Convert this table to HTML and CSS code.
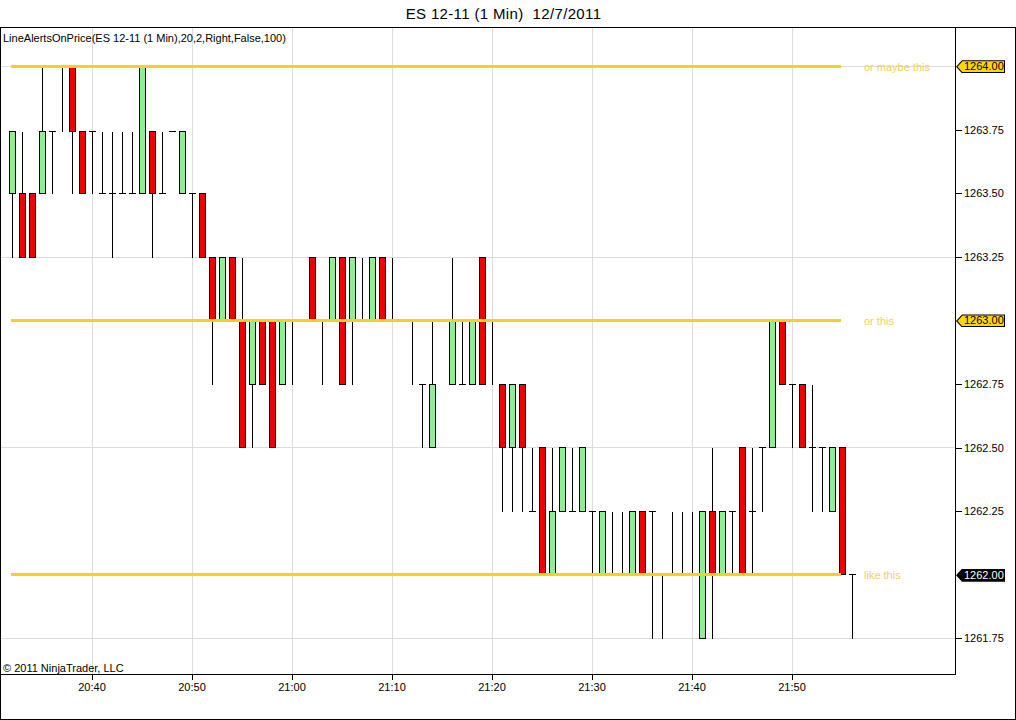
FILE: index.html
```html
<!DOCTYPE html>
<html lang="en">
<head>
<meta charset="utf-8">
<title>ES 12-11 (1 Min) 12/7/2011</title>
<link rel="stylesheet" href="styles.css">
</head>
<body>
<div class="title">ES 12-11 (1 Min)&nbsp; 12/7/2011</div>
<div class="frame">
  <div class="plot">
    <svg id="chart" class="chart" viewBox="1 28 954 646" width="954" height="646" xmlns="http://www.w3.org/2000/svg">
      <g id="grid"></g>
      <g id="bars"></g>
      <g id="hlines"></g>
    </svg>
    <div class="ind-label">LineAlertsOnPrice(ES 12-11 (1 Min),20,2,Right,False,100)</div>
    <div class="copyright">© 2011 NinjaTrader, LLC</div>
  </div>
  <div class="price-axis">
    <div class="pt flagged"><span class="flag"><span>1264.00</span></span></div>
    <div class="pt"><span class="val">1263.75</span></div>
    <div class="pt"><span class="val">1263.50</span></div>
    <div class="pt"><span class="val">1263.25</span></div>
    <div class="pt flagged"><span class="flag"><span>1263.00</span></span></div>
    <div class="pt"><span class="val">1262.75</span></div>
    <div class="pt"><span class="val">1262.50</span></div>
    <div class="pt"><span class="val">1262.25</span></div>
    <div class="pt flagged"><span class="flag dark"><span>1262.00</span></span></div>
    <div class="pt"><span class="val">1261.75</span></div>
  </div>
  <div class="time-axis">
    <div class="tl"><span>20:40</span></div>
    <div class="tl"><span>20:50</span></div>
    <div class="tl"><span>21:00</span></div>
    <div class="tl"><span>21:10</span></div>
    <div class="tl"><span>21:20</span></div>
    <div class="tl"><span>21:30</span></div>
    <div class="tl"><span>21:40</span></div>
    <div class="tl"><span>21:50</span></div>
  </div>
  <div class="corner"></div>
</div>
<script src="chart.js"></script>
</body>
</html>
```

FILE: styles.css
```css
* { box-sizing: border-box; }
html, body { margin: 0; padding: 0; background: #fff; }
body {
  width: 1016px;
  height: 720px;
  overflow: hidden;
  font-family: "Liberation Sans", Arial, sans-serif;
  color: #000;
}
.title {
  height: 27px;
  line-height: 27px;
  text-align: center;
  font-size: 15px;
  letter-spacing: 0.35px;
  padding-right: 9px;
  white-space: nowrap;
}
.frame {
  display: grid;
  grid-template-columns: 955px 59px;
  grid-template-rows: 647px 44px;
  width: 1016px;
  height: 693px;
  border: 1px solid #000;
}
.plot {
  position: relative;
  border-right: 1px solid #000;
  border-bottom: 1px solid #000;
  overflow: hidden;
}
.chart { display: block; }
.chart .gl { stroke: #dcdcdc; stroke-width: 1; shape-rendering: crispEdges; }
.chart .wick { stroke: #000; stroke-width: 1; shape-rendering: crispEdges; }
.chart .up { fill: #90ee90; stroke: #000; stroke-width: 1; shape-rendering: crispEdges; }
.chart .dn { fill: #f00000; stroke: #000; stroke-width: 1; shape-rendering: crispEdges; }
.chart .alert { stroke: #f5d21c; stroke-width: 3; shape-rendering: crispEdges; }
.chart .ll {
  fill: #f0d256;
  font-family: "Liberation Sans", Arial, sans-serif;
  font-size: 11px;
}
.ind-label, .copyright {
  position: absolute;
  left: 2px;
  font-size: 11px;
  line-height: 13px;
  white-space: nowrap;
}
.ind-label { top: 4px; }
.copyright { top: 634px; }

.price-axis {
  display: flex;
  flex-direction: column;
  padding-top: 7px;
  font-size: 11px;
}
.pt {
  flex: none;
  height: 63.56px;
  display: flex;
  align-items: center;
  line-height: 13px;
  white-space: nowrap;
}
.pt::before {
  content: "";
  flex: none;
  width: 6px;
  height: 1px;
  background: #000;
  margin-right: 2px;
}
.pt.flagged::before { display: none; }
.flag {
  display: block;
  width: 49px;
  height: 13px;
  padding: 1px;
  background: #000;
  clip-path: polygon(0 50%, 6px 0, 100% 0, 100% 100%, 6px 100%);
}
.flag span {
  display: block;
  height: 11px;
  line-height: 11px;
  padding-left: 7px;
  background: #ffd700;
  color: #000;
  clip-path: polygon(0.5px 50%, 5.5px 0, 100% 0, 100% 100%, 5.5px 100%);
}
.flag.dark span { background: #000; color: #fff; }

.time-axis {
  display: flex;
  padding-left: 41px;
  font-size: 11px;
}
.tl {
  flex: none;
  width: 100px;
  display: flex;
  flex-direction: column;
  align-items: center;
  line-height: 13px;
  padding-top: 0;
}
.tl::before {
  content: "";
  width: 1px;
  height: 5px;
  margin-bottom: 1px;
  background: #000;
  align-self: flex-start;
  margin-left: 50px;
}
```

FILE: chart.js
```js
(function () {
  var NS = 'http://www.w3.org/2000/svg';
  // pixel rows for price levels 1264.00, 1263.75 ... 1261.75
  var Y = [66, 131, 193, 257, 320, 384, 447, 511, 574, 638];
  // open, close, high, low as level indexes (0 = 1264.00)
  var bars = [
    [2,1,1,3],[2,3,1,3],[2,3,2,3],[2,1,0,2],[1,1,1,2],[0,0,0,1],[0,1,0,2],[1,2,1,2],[1,1,1,2],[2,2,1,2],
    [2,2,1,3],[2,2,1,2],[2,2,1,2],[2,0,0,2],[1,2,1,3],[2,2,1,2],[1,1,1,1],[2,1,1,2],[2,2,2,3],[2,3,2,3],
    [3,4,3,5],[4,3,3,4],[3,4,3,4],[4,6,3,6],[5,4,4,6],[4,5,4,5],[4,6,4,6],[5,4,4,5],[4,4,4,5],[4,4,4,4],
    [3,4,3,4],[4,4,4,5],[4,3,3,4],[3,5,3,5],[4,3,3,5],[4,4,3,4],[4,3,3,4],[3,4,3,4],[4,4,3,4],[4,4,4,4],
    [4,4,4,5],[5,5,5,6],[6,5,4,6],[4,4,4,4],[5,4,3,5],[5,5,4,5],[5,4,4,5],[3,5,3,5],[4,4,4,5],[5,6,5,7],
    [6,5,5,7],[5,6,5,7],[7,7,6,7],[6,8,6,8],[8,7,6,8],[7,6,6,7],[7,7,6,7],[7,6,6,7],[7,7,7,8],[8,7,7,8],
    [8,8,7,8],[8,8,7,8],[8,7,7,8],[7,8,7,8],[7,7,7,9],[8,8,8,9],[8,8,7,8],[8,8,7,8],[8,8,7,8],[9,7,7,9],
    [7,8,6,9],[8,7,7,8],[7,7,7,8],[6,8,6,8],[7,7,6,8],[6,6,6,7],[6,4,4,6],[4,5,4,5],[5,5,5,6],[5,6,5,6],
    [6,6,5,7],[6,6,6,7],[7,6,6,7],[6,8,6,8],[8,8,8,9]
  ];

  function el(tag, attrs, parent) {
    var e = document.createElementNS(NS, tag);
    for (var k in attrs) { e.setAttribute(k, attrs[k]); }
    parent.appendChild(e);
    return e;
  }

  var grid = document.getElementById('grid');
  var g = document.getElementById('bars');
  var hl = document.getElementById('hlines');

  var j;
  for (j = 0; j < 8; j++) {
    var gx = 92.5 + 100 * j;
    el('line', { x1: gx, y1: 28, x2: gx, y2: 674, 'class': 'gl' }, grid);
  }
  [0, 3, 6, 9].forEach(function (k) {
    el('line', { x1: 1, y1: Y[k] + 0.5, x2: 955, y2: Y[k] + 0.5, 'class': 'gl' }, grid);
  });

  bars.forEach(function (b, i) {
    var o = b[0], c = b[1], h = b[2], l = b[3];
    var cx = 12.5 + 10 * i;
    if (h !== l) {
      el('line', { x1: cx, y1: Y[h] + 0.5, x2: cx, y2: Y[l] + 0.5, 'class': 'wick' }, g);
    }
    if (o === c) {
      el('line', { x1: 9 + 10 * i, y1: Y[o] + 0.5, x2: 16 + 10 * i, y2: Y[o] + 0.5, 'class': 'wick' }, g);
    } else {
      var top = Math.min(o, c), bot = Math.max(o, c);
      el('rect', {
        x: 9.5 + 10 * i, y: Y[top] + 0.5, width: 6, height: Y[bot] - Y[top],
        'class': c < o ? 'up' : 'dn'
      }, g);
    }
  });

  [[0, 'or maybe this'], [4, 'or this'], [8, 'like this']].forEach(function (a) {
    var y = Y[a[0]] + 0.5;
    el('line', { x1: 11, y1: y, x2: 841, y2: y, 'class': 'alert' }, hl);
    var t = el('text', { x: 864, y: Y[a[0]] + 5, 'class': 'll' }, hl);
    t.textContent = a[1];
  });
})();
```
